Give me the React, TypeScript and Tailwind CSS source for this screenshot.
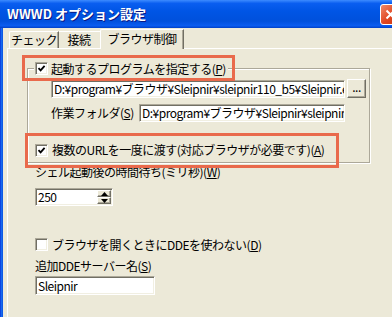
import React from 'react'

const face = "font-['Noto_Sans_CJK_JP',sans-serif]"
const sunken =
  'bg-white border border-t-[#ACA899] border-l-[#ACA899] border-b-white border-r-white shadow-[inset_1px_1px_0_#716F64,inset_-1px_-1px_0_#F1EFE2]'
const raised =
  'bg-[#ECE9D8] border border-t-white border-l-white border-b-[#716F64] border-r-[#716F64] shadow-[inset_-1px_-1px_0_#ACA899]'

function Mn({ children }: { children: string }) {
  return <span className="underline underline-offset-[1px]">{children}</span>
}

function Check({ checked }: { checked?: boolean }) {
  return (
    <span className={`${sunken} w-[13px] h-[13px] shrink-0 flex items-center justify-center`}>
      {checked && (
        <svg width="9" height="9" viewBox="0 0 9 9">
          <path d="M1.5 4.2 L3.6 6.4 L7.6 1.8" fill="none" stroke="#000" strokeWidth="1.8" />
        </svg>
      )}
    </span>
  )
}

function Field({ value, className }: { value: string; className: string }) {
  return (
    <div className={`${sunken} ${className} flex items-center pl-[2px] overflow-hidden whitespace-nowrap leading-[14px]`}>
      {value}
    </div>
  )
}

export default function App() {
  return (
    <div className={`${face} relative w-[392px] h-[317px] overflow-hidden bg-[#ECE9D8] text-[12px] text-black tracking-[-0.5px] flex flex-col`}>
      {/* title bar */}
      <div className="h-[28px] shrink-0 flex items-center bg-[linear-gradient(to_bottom,#3d8bff_0%,#0a5ef0_12%,#0055e5_40%,#0050dc_75%,#0a5cf0_92%,#003fc6_100%)]">
        <span className="ml-[7px] text-white font-bold text-[13px] tracking-[0px] leading-[16px] [text-shadow:1px_1px_0_#0a1883]">
          WWWD オプション設定
        </span>
        <div className="ml-auto mr-[-9px] w-[21px] h-[21px] rounded-[3px] border border-white bg-[linear-gradient(135deg,#f08a6a,#e0451f_55%,#c73a16)] flex items-center justify-center">
          <svg width="11" height="11" viewBox="0 0 11 11">
            <path d="M1.5 1.5 L9.5 9.5 M9.5 1.5 L1.5 9.5" stroke="#fff" strokeWidth="2" />
          </svg>
        </div>
      </div>

      <div className="flex flex-1">
        <div className="w-[3px] bg-[linear-gradient(to_right,#0831d9,#166aee_50%,#0a50e0)]" />
        <div className="flex-1 flex flex-col">
          {/* tabs */}
          <div className="h-[20px] ml-[6px] flex items-end relative z-10">
            <div className="w-[50px] h-[17px] rounded-tl-[2px] border-t border-l border-white border-r border-r-[#716F64] shadow-[inset_-1px_0_0_#ACA899] flex items-center justify-center leading-[14px] pb-[1px]">
              チェック
            </div>
            <div className="w-[43px] h-[17px] border-t border-white border-r border-r-[#716F64] shadow-[inset_-1px_0_0_#ACA899] flex items-center justify-center leading-[14px] pb-[1px] pr-[2px]">
              接続
            </div>
            <div className="-ml-[2px] w-[84px] h-[20px] -mb-[1px] bg-[#ECE9D8] rounded-tl-[2px] border-t border-l border-white border-r border-r-[#716F64] shadow-[inset_-1px_0_0_#ACA899] flex items-center justify-center leading-[14px] pb-[2px]">
              ブラウザ制御
            </div>
          </div>

          {/* panel */}
          <div className="ml-[4px] flex-1 border-t border-l border-white flex flex-col pl-[19px]">
            <div className="relative mt-[19px] w-[343px] h-[95px] shrink-0 border border-[#ACA899] shadow-[inset_1px_1px_0_#fff,1px_1px_0_#fff] flex flex-col">
              <div className="absolute left-[6px] -top-[7px] h-[13px] pl-[1px] pr-[2px] bg-[#ECE9D8] flex items-center gap-[3px] leading-[14px]">
                <Check checked />
                <span>起動するプログラムを指定する(<Mn>P</Mn>)</span>
              </div>

              <div className="mt-[11px] ml-[23px] flex gap-[2px]">
                <Field value="D:¥program¥ブラウザ¥Sleipnir¥sleipnir110_b5¥Sleipnir.exe" className="w-[294px] h-[18px]" />
                <div className={`${raised} w-[19px] h-[19px] -mt-[1px] flex items-center justify-center leading-[10px] pb-[3px]`}>...</div>
              </div>

              <div className="mt-[6px] ml-[23px] flex items-center">
                <span className="w-[88px] leading-[14px]">作業フォルダ(<Mn>S</Mn>)</span>
                <Field value="D:¥program¥ブラウザ¥Sleipnir¥sleipnir110_b5" className="w-[206px] h-[18px]" />
              </div>

              <div className="mt-[21px] ml-[7px] flex items-center gap-[4px] leading-[14px]">
                <Check checked />
                <span>複数のURLを一度に渡す(対応ブラウザが必要です)(<Mn>A</Mn>)</span>
              </div>
            </div>

            <div className="ml-[8px] mt-[2px] leading-[14px]">
              シェル起動後の時間待ち(ミリ秒)(<Mn>W</Mn>)
            </div>

            <div className={`${sunken} ml-[8px] mt-[9px] w-[78px] h-[18px] flex items-center pl-[2px] pr-[1px] leading-[14px]`}>
              <span className="flex-1">250</span>
              <div className="flex flex-col w-[14px] h-[14px]">
                <div className={`${raised} flex-1 flex items-center justify-center`}>
                  <svg width="7" height="4" viewBox="0 0 7 4"><path d="M0 4 L3.5 0 L7 4 Z" fill="#000" /></svg>
                </div>
                <div className={`${raised} flex-1 flex items-center justify-center`}>
                  <svg width="7" height="4" viewBox="0 0 7 4"><path d="M0 0 L3.5 4 L7 0 Z" fill="#000" /></svg>
                </div>
              </div>
            </div>

            <div className="ml-[8px] mt-[32px] h-[13px] flex items-center gap-[4px] leading-[14px]">
              <Check />
              <span>ブラウザを開くときにDDEを使わない(<Mn>D</Mn>)</span>
            </div>

            <div className="ml-[8px] mt-[8px] leading-[14px]">追加DDEサーバー名(<Mn>S</Mn>)</div>

            <Field value="Sleipnir" className="ml-[8px] mt-[3px] w-[120px] h-[19px]" />
          </div>
        </div>
      </div>

      {/* highlight annotations */}
      <div className="absolute left-[22px] top-[55px] w-[213px] h-[26px] border-[3px] border-[#E96A4C] pointer-events-none" />
      <div className="absolute left-[25px] top-[133px] w-[314px] h-[35px] border-[3px] border-[#E96A4C] pointer-events-none" />
    </div>
  )
}
